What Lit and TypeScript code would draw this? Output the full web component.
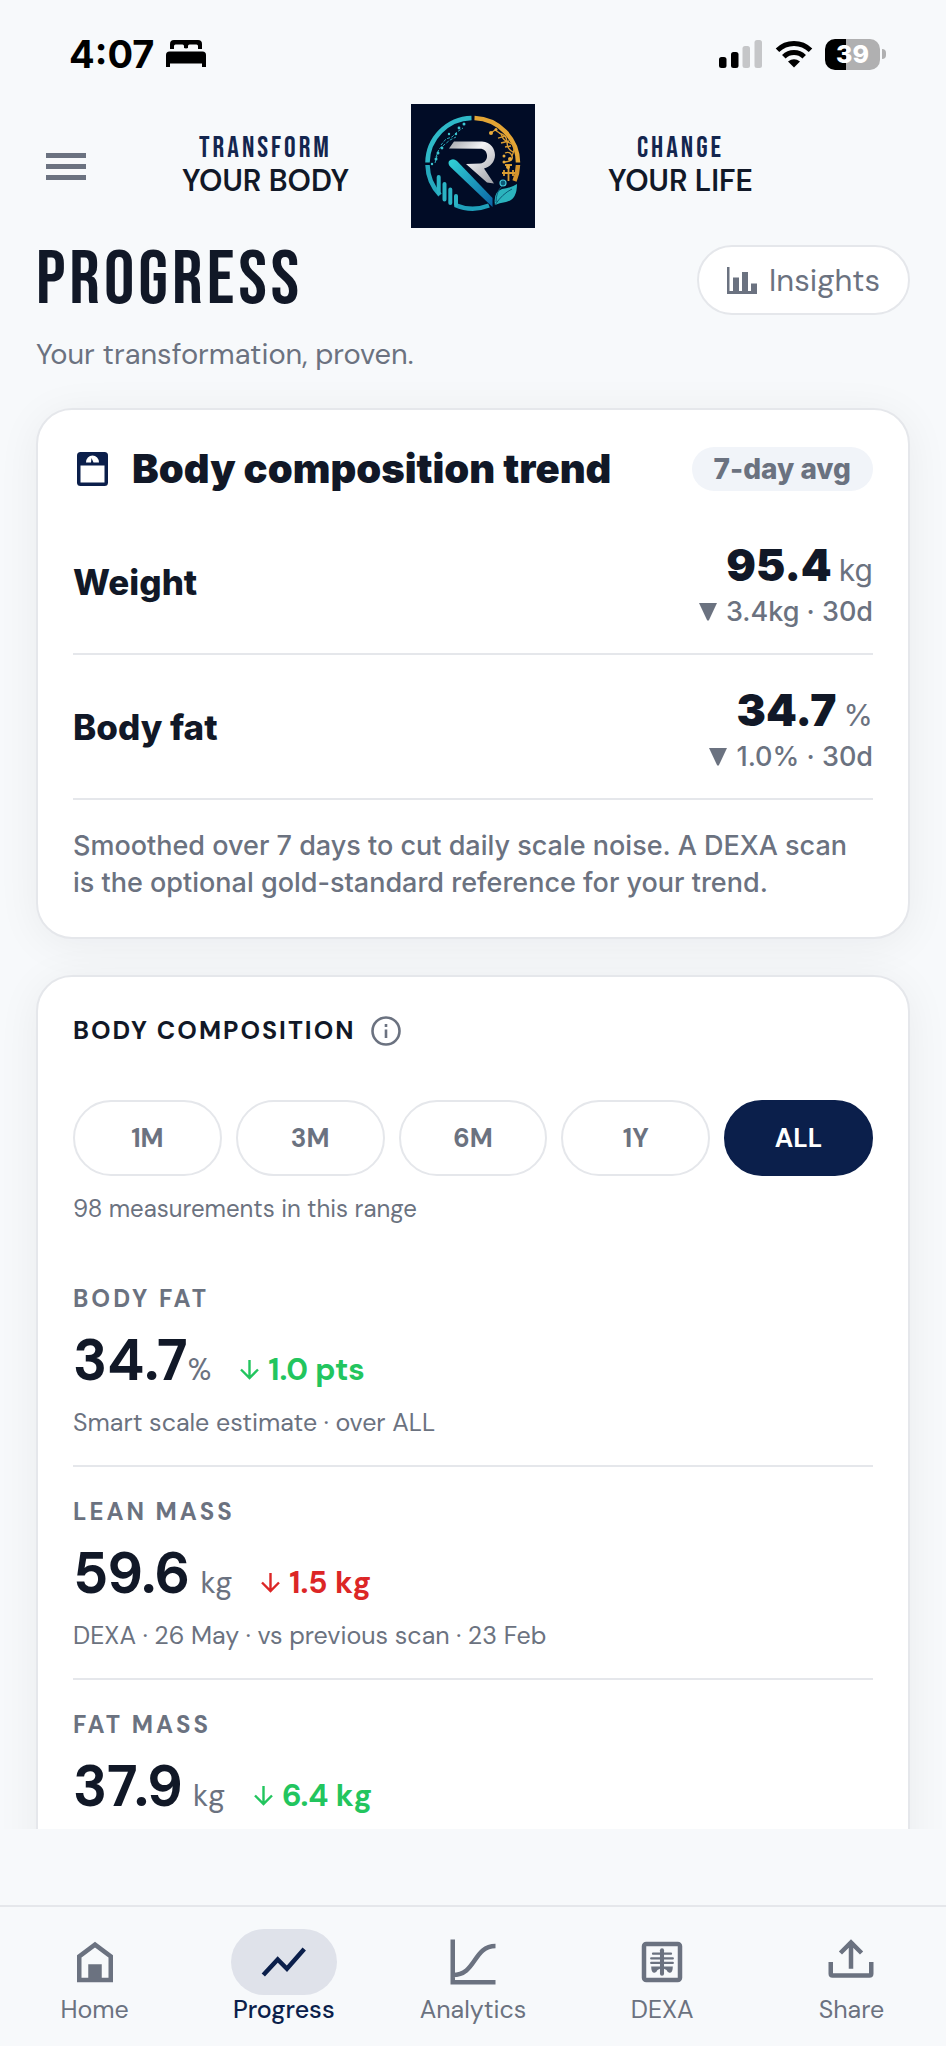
import { html, css, svg, LitElement } from 'lit';
import { property, state } from 'lit/decorators.js';
import { classMap } from 'lit/directives/class-map.js';

interface TrendRow {
  label: string;
  value: string;
  unit: string;
  change: string;
}

interface Metric {
  label: string;
  value: string;
  unit: string;
  spaced: boolean;
  delta: string;
  tone: string;
  note?: string;
}

const TREND: TrendRow[] = [
  { label: 'Weight', value: '95.4', unit: 'kg', change: '3.4kg · 30d' },
  { label: 'Body fat', value: '34.7', unit: '%', change: '1.0% · 30d' },
];

const METRICS: Metric[] = [
  { label: 'BODY FAT', value: '34.7', unit: '%', spaced: false, delta: '1.0 pts', tone: 'good', note: 'Smart scale estimate · over ALL' },
  { label: 'LEAN MASS', value: '59.6', unit: 'kg', spaced: true, delta: '1.5 kg', tone: 'bad', note: 'DEXA · 26 May · vs previous scan · 23 Feb' },
  { label: 'FAT MASS', value: '37.9', unit: 'kg', spaced: true, delta: '6.4 kg', tone: 'good' },
];

const RANGES = ['1M', '3M', '6M', '1Y', 'ALL'];

const NAV_ICONS = {
  Home: svg`
    <path d="M5 20V9.5l7-5.2 7 5.2V20z" fill="none" stroke="currentColor" stroke-width="2" />
    <path d="M9 13h6v7H9z" fill="currentColor" />`,
  Progress: svg`
    <path d="M2.8 17.8l6.4-6.9 4.1 4.1L21 6.2" fill="none" stroke="currentColor" stroke-width="2" />`,
  Analytics: svg`
    <path d="M3 2v19h19M3 17.8C13.5 17.8 12 4.9 22 4.9" fill="none" stroke="currentColor" stroke-width="2" />`,
  DEXA: svg`
    <rect x="4" y="4" width="16" height="16" rx="1" fill="none" stroke="currentColor" stroke-width="2" />
    <path d="M12 6.8v10.4" stroke="currentColor" stroke-width="1.8" stroke-linecap="round" />
    <path d="M8 8.3h8M7.2 10.4h9.6M7.2 12.4h9.6" stroke="currentColor" stroke-width="1" stroke-linecap="round" />
    <path d="M7.2 14h9.6q0 2.6-1.2 2.8-1 .2-1.6-1.2l-2-1-2 1q-.6 1.4-1.6 1.2Q7.2 16.6 7.2 14z" fill="currentColor" />`,
  Share: svg`
    <path d="M3 12v5.2q0 .8.8.8h16.4q.8 0 .8-.8V12M12 15V3.5M7.3 8L12 3.3 16.7 8" fill="none" stroke="currentColor" stroke-width="2" />`,
};

/**
 * Phone status bar with the clock, signal, wifi and battery.
 */
class StatusBar extends LitElement {
  @property({ type: String })
  time = '4:07';
  @property({ type: Number })
  battery = 39;

  static get styles() {
    return css`
      :host {
        display: flex;
        justify-content: space-between;
        align-items: center;
        height: 104px;
        padding: 4px 60px 0 69px;
        box-sizing: border-box;
        color: #000;
        font-family: Inter, 'Liberation Sans', sans-serif;
      }

      .side {
        display: flex;
        align-items: center;
        gap: 12px;
      }

      .time {
        font-size: 38px;
        line-height: 44px;
        font-weight: 700;
      }

      .battery-box {
        display: flex;
        align-items: center;
        gap: 2px;
      }

      .battery {
        width: 55px;
        height: 31px;
        border-radius: 10px;
        background: linear-gradient(to right, #000 39%, #b0b0b1 39%);
        color: #fff;
        font-size: 25px;
        line-height: 31px;
        font-weight: 800;
        text-align: center;
      }

      .tip {
        width: 4px;
        height: 10px;
        border-radius: 0 4px 4px 0;
        background: #b0b0b1;
      }

      svg {
        display: block;
      }
    `;
  }

  render() {
    return html`
      <div class="side">
        <span class="time">${this.time}</span>
        <svg width="40" height="28" viewBox="0 0 40 28" aria-hidden="true">
          <path d="M4 9V4q0-4 4-4h24q4 0 4 4v5h-4V6q0-1.5-1.5-1.5h-7q-1.5 0-1.5 1.5v2q-2 .8-4 0V6q0-1.5-1.5-1.5h-7Q8 4.5 8 6v3z" />
          <path d="M0 27V15q0-3.5 3.5-3.5h33q3.5 0 3.5 3.5v12h-4v-3.5H4V27z" />
        </svg>
      </div>
      <div class="side">
        <svg width="44" height="28" viewBox="0 0 44 28" aria-hidden="true">
          <rect x="0" y="17" width="7.5" height="11" rx="2.5" />
          <rect x="12" y="12" width="7.5" height="16" rx="2.5" />
          <rect x="23.5" y="6" width="7.5" height="22" rx="2.5" fill="#c5c6c8" />
          <rect x="35.5" y="0" width="7.5" height="28" rx="2.5" fill="#c5c6c8" />
        </svg>
        <svg width="38" height="28" viewBox="0 0 38 28" aria-hidden="true">
          <path d="M2.5 10.3a23.5 23.5 0 0 1 33 0M8.8 16.8a14.5 14.5 0 0 1 20.4 0" fill="none" stroke="#000" stroke-width="5" />
          <path d="M19 27.5l-6-6q6-4.5 12 0z" />
        </svg>
        <div class="battery-box">
          <div class="battery">${this.battery}</div>
          <div class="tip"></div>
        </div>
      </div>
    `;
  }
}

customElements.define('status-bar', StatusBar);

/**
 * Round R emblem on a dark square.
 */
class BrandLogo extends LitElement {
  static get styles() {
    return css`
      :host,
      svg {
        display: block;
      }
    `;
  }

  render() {
    return html`
      <svg width="124" height="124" viewBox="0 0 124 124" role="img" aria-label="Logo">
        <defs>
          <linearGradient id="blade" x1="0" y1="0" x2="1" y2="1">
            <stop offset="0" stop-color="#32d3d6" />
            <stop offset="1" stop-color="#0a63a5" />
          </linearGradient>
          <linearGradient id="silver" x1="0" y1="0" x2="1" y2="1">
            <stop offset="0" stop-color="#a3a5ab" />
            <stop offset="0.4" stop-color="#f3f3f5" />
            <stop offset="1" stop-color="#9c9ea5" />
          </linearGradient>
        </defs>
        <rect width="124" height="124" fill="#010c26" />
        <g fill="none" stroke-width="4.5">
          <path d="M16.5 58.5A45.3 45.3 0 0 1 60.5 14" stroke="#2fb9c8" />
          <path d="M63.5 14A45.3 45.3 0 0 1 107 58.5" stroke="#e3a535" />
          <path d="M107 61A45.3 45.3 0 0 1 103.5 77" stroke="#d2922c" />
          <path d="M16.5 61A45.3 45.3 0 0 0 29 91" stroke="#25a9bd" />
          <path d="M44 101A45.3 45.3 0 0 0 78 101.5" stroke="#1f9fba" />
        </g>
        <path
          d="M27.7 73v16M33.5 80v15.5M39.3 85.5v13.5M45 92v9"
          stroke="#2bb3c4"
          stroke-width="4"
          stroke-linecap="round"
        />
        <path
          d="M30 41l5-6 6-2 5-5 6-4M25 53l3-8 5-4 6-5 6-3M24 59l2-7"
          fill="none"
          stroke="#2aa9ba"
          stroke-width="1"
          stroke-dasharray="3 1.5"
        />
        <g fill="#3cc6d2">
          <circle cx="53" cy="20" r="1.5" /><circle cx="48" cy="24" r="1.4" />
          <circle cx="45" cy="30" r="1.2" /><circle cx="38" cy="30" r="1.2" />
          <circle cx="31" cy="44" r="1.4" /><circle cx="27" cy="49" r="1.5" />
          <circle cx="25" cy="55" r="1.5" /><circle cx="21" cy="60" r="1.2" />
        </g>
        <g fill="none" stroke="#d99c32" stroke-width="1.3">
          <path d="M80 29l4-3 6 4q2 7 9 9t2 13M88 29q8 2 8 9t6 10M87 34l7-2M90 39l8-2M94 43l6-1M94 49q5-2 7 3t-7 6" />
          <path d="M91 69h13M97.5 61v16M93 66v6M102 66v6M94 61h7" stroke-width="1.8" />
        </g>
        <g fill="#e8ac3c">
          <circle cx="80" cy="29" r="2" /><circle cx="85" cy="25.5" r="1.5" />
          <circle cx="93" cy="52" r="1.5" /><circle cx="93" cy="58" r="1.5" />
          <circle cx="99" cy="55" r="2" /><circle cx="97" cy="63" r="2" />
        </g>
        <path
          d="M38 44.5L43 37.5H71C80 38 84 45 84 51C84 58 79 63 73 64.5L83 79.5L76 78.5L55 60L69 59.5C74 59 76.5 55 76 51C75.5 47 73 44.7 69 44.7Z"
          fill="url(#silver)"
        />
        <path d="M38 57Q42 53.5 46 57L81.5 94V103L39.5 63Q36.5 60 38 57Z" fill="url(#blade)" />
        <path d="M84 101Q82 88 91 85Q100 84 106 80Q106 96 95 98Q88 99 84 101Z" fill="#2bb3bd" />
        <path d="M84 101Q91 90 101 85M85 98q0-10 6-16" fill="none" stroke="#0b5a77" stroke-width="1" />
        <circle cx="92" cy="79" r="3" fill="#0b5a77" stroke="#45c6d6" stroke-width="1.2" />
      </svg>
    `;
  }
}

customElements.define('brand-logo', BrandLogo);

class AppRoot extends LitElement {
  @state()
  range = 'ALL';
  @state()
  page = 'Progress';

  static get styles() {
    return css`
      :host {
        display: flex;
        flex-direction: column;
        height: 100vh;
        background: #f7f9fb;
        color: #111827;
        font-family: 'DM Sans', Inter, 'Liberation Sans', sans-serif;
        font-size: 25px;
        line-height: 30px;
      }

      * {
        box-sizing: border-box;
      }

      svg {
        display: block;
        flex: none;
      }

      h1,
      h2,
      h3,
      p {
        margin: 0;
      }

      button {
        border: 0;
        padding: 0;
        background: none;
        color: #6b7280;
        font-family: inherit;
        cursor: pointer;
      }

      .header {
        display: grid;
        grid-template-columns: 84px 1fr 124px 1fr 84px;
        align-items: center;
        padding: 0 36px;
      }

      .menu {
        display: flex;
        flex-direction: column;
        gap: 6px;
        width: 60px;
        padding: 10px;
      }

      .menu span {
        height: 5px;
        background: #6b7280;
      }

      .slogan {
        display: flex;
        flex-direction: column;
        align-items: center;
        padding-bottom: 2px;
        font-size: 30px;
        line-height: 32px;
        font-weight: 600;
      }

      .slogan .accent {
        color: #14264f;
        font-family: 'Bebas Neue', 'Roboto Condensed', 'Liberation Sans Narrow', sans-serif;
        font-size: 29px;
        letter-spacing: 3px;
        font-weight: 400;
      }

      main {
        flex: 1;
        min-height: 0;
        overflow: hidden;
        display: flex;
        flex-direction: column;
        padding: 17px 36px 0;
      }

      .title-row {
        display: flex;
        justify-content: space-between;
        align-items: flex-start;
        height: 70px;
      }

      h1 {
        font-family: 'Bebas Neue', 'Roboto Condensed', 'Liberation Sans Narrow', sans-serif;
        font-size: 76px;
        line-height: 72px;
        letter-spacing: 4px;
        font-weight: 400;
      }

      .insights {
        display: flex;
        align-items: center;
        gap: 12px;
        height: 70px;
        padding: 0 28px;
        border: 2px solid #e5e7eb;
        border-radius: 35px;
        background: #fff;
        font-size: 31px;
      }

      .subtitle {
        margin-top: 21px;
        color: #6b7280;
        font-size: 29px;
        line-height: 36px;
      }

      .card {
        flex: none;
        margin-top: 36px;
        padding: 36px 35px;
        border: 2px solid #e5e7eb;
        border-radius: 36px;
        background: #fff;
        box-shadow: 0 6px 44px rgb(17 24 39 / 6%);
      }

      .trend-card {
        font-family: Inter, 'Liberation Sans', sans-serif;
      }

      .card-head {
        display: flex;
        align-items: center;
        height: 46px;
        margin-bottom: 18px;
        padding-left: 4px;
      }

      .card-head h2 {
        flex: 1;
        margin-left: 24px;
        font-size: 40px;
        line-height: 44px;
        font-weight: 900;
      }

      .badge {
        padding: 0 22px;
        border-radius: 22px;
        background: #f1f4f9;
        color: #6b7280;
        font-size: 28px;
        line-height: 44px;
        font-weight: 800;
      }

      .trend {
        display: flex;
        justify-content: space-between;
        align-items: center;
        height: 145px;
        border-bottom: 2px solid #e5e7eb;
      }

      .trend h3 {
        font-size: 35px;
        line-height: 44px;
        font-weight: 800;
      }

      .reading {
        display: flex;
        flex-direction: column;
        align-items: flex-end;
        gap: 2px;
        padding-top: 6px;
        color: #6b7280;
      }

      .reading strong {
        color: #111827;
        font-size: 44px;
        line-height: 52px;
        font-weight: 900;
      }

      .unit {
        color: #6b7280;
        font-size: 30px;
        font-weight: 400;
      }

      .change {
        display: flex;
        align-items: center;
        gap: 9px;
        font-size: 27px;
        line-height: 38px;
        font-weight: 500;
      }

      .explain {
        margin-top: 27px;
        color: #6b7280;
        font-size: 27px;
        line-height: 37px;
        font-weight: 500;
      }

      .section-head {
        display: flex;
        align-items: center;
        gap: 16px;
        height: 35px;
        margin-bottom: 52px;
      }

      .section-head h2 {
        font-size: 25px;
        line-height: 30px;
        font-weight: 700;
        letter-spacing: 2px;
      }

      .ranges {
        display: flex;
        gap: 14px;
      }

      .range {
        flex: 1;
        height: 76px;
        border: 2px solid #e5e7eb;
        border-radius: 38px;
        font-size: 26px;
        font-weight: 700;
      }

      .range.active {
        border-color: #0b1f4b;
        background: #0b1f4b;
        color: #fff;
      }

      .count {
        margin-top: 18px;
        color: #6b7280;
        font-size: 24px;
      }

      .metrics {
        margin-top: 30px;
      }

      .metric {
        height: 213px;
        padding-top: 30px;
        border-bottom: 2px solid #e5e7eb;
        color: #6b7280;
      }

      .metric h3 {
        font-size: 24px;
        line-height: 30px;
        font-weight: 700;
        letter-spacing: 3px;
      }

      .figures {
        display: flex;
        align-items: baseline;
        margin: 15px 0 6px;
        line-height: 64px;
      }

      .figures strong {
        color: #111827;
        font-size: 57px;
        font-weight: 700;
      }

      .unit.spaced {
        margin-left: 10px;
      }

      .delta {
        display: flex;
        align-items: baseline;
        gap: 9px;
        margin-left: 29px;
        font-size: 31px;
        font-weight: 700;
      }

      .good {
        color: #22c55e;
      }

      .bad {
        color: #dc2626;
      }

      nav {
        display: flex;
        flex: none;
        height: 141px;
        margin-top: 76px;
        padding-top: 22px;
        border-top: 2px solid #e5e7eb;
      }

      nav a {
        display: flex;
        flex: 1;
        flex-direction: column;
        align-items: center;
        color: #6b7280;
        text-decoration: none;
      }

      .tab-icon {
        padding: 6px 26px;
        border-radius: 33px;
      }

      nav a.active {
        color: #0b1f4b;
        font-weight: 500;
      }

      nav a.active .tab-icon {
        background: #dfe2ea;
      }
    `;
  }

  renderTrend(row: TrendRow) {
    return html`
      <div class="trend">
        <h3>${row.label}</h3>
        <div class="reading">
          <div><strong>${row.value}</strong> <span class="unit">${row.unit}</span></div>
          <div class="change">
            <svg width="18" height="18" viewBox="0 0 18 18" aria-hidden="true">
              <path d="M0 0h18L10 17q-1 1.5-2 0z" fill="currentColor" />
            </svg>
            ${row.change}
          </div>
        </div>
      </div>
    `;
  }

  renderMetric(metric: Metric) {
    return html`
      <div class="metric">
        <h3>${metric.label}</h3>
        <div class="figures">
          <strong>${metric.value}</strong>
          <span class="unit ${classMap({ spaced: metric.spaced })}">${metric.unit}</span>
          <span class="delta ${metric.tone}">
            <svg width="19" height="20" viewBox="0 0 19 20" aria-hidden="true">
              <path d="M9.5 0v18M1 9.5l8.5 8.5 8.5-8.5" fill="none" stroke="currentColor" stroke-width="2.4" />
            </svg>
            ${metric.delta}
          </span>
        </div>
        ${metric.note ? html`<p>${metric.note}</p>` : ''}
      </div>
    `;
  }

  render() {
    return html`
      <status-bar></status-bar>
      <header class="header">
        <button class="menu" aria-label="Menu"><span></span><span></span><span></span></button>
        <div class="slogan"><span class="accent">TRANSFORM</span><span>YOUR BODY</span></div>
        <brand-logo></brand-logo>
        <div class="slogan"><span class="accent">CHANGE</span><span>YOUR LIFE</span></div>
      </header>
      <main>
        <div class="title-row">
          <h1>PROGRESS</h1>
          <button class="insights">
            <svg width="30" height="27" viewBox="0 0 30 27" fill="currentColor" aria-hidden="true">
              <path d="M0 0h2.5v24H6V10.5h6V24h3V5h6v19h3v-7.5h6V27H0z" />
            </svg>
            Insights
          </button>
        </div>
        <p class="subtitle">Your transformation, proven.</p>

        <section class="card trend-card">
          <div class="card-head">
            <svg width="31" height="34" viewBox="0 0 31 34" aria-hidden="true">
              <rect width="31" height="34" rx="3.5" fill="#0b1f4b" />
              <path d="M3.5 13.5h24v17h-24zM9 10.5a6.5 7 0 0 1 13 0h-5.5L14.5 6l-.5 4.5z" fill="#fff" />
            </svg>
            <h2>Body composition trend</h2>
            <span class="badge">7-day avg</span>
          </div>
          ${TREND.map((row) => this.renderTrend(row))}
          <p class="explain">
            Smoothed over 7 days to cut daily scale noise. A DEXA scan is the optional gold-standard reference for your trend.
          </p>
        </section>

        <section class="card">
          <div class="section-head">
            <h2>BODY COMPOSITION</h2>
            <button aria-label="About body composition">
              <svg width="30" height="30" viewBox="0 0 30 30" aria-hidden="true">
                <circle cx="15" cy="15" r="13.5" fill="none" stroke="currentColor" stroke-width="2.6" />
                <path d="M15 13.5v8.5M15 8v3" stroke="currentColor" stroke-width="2.6" />
              </svg>
            </button>
          </div>
          <div class="ranges" role="group" aria-label="Range">
            ${RANGES.map(
              (name) => html`
                <button
                  class="range ${classMap({ active: name === this.range })}"
                  aria-pressed=${name === this.range}
                  @click=${() => (this.range = name)}
                >${name}</button>
              `
            )}
          </div>
          <p class="count">98 measurements in this range</p>
          <div class="metrics">${METRICS.map((metric) => this.renderMetric(metric))}</div>
        </section>
      </main>
      <nav>
        ${Object.entries(NAV_ICONS).map(
          ([name, icon]) => html`
            <a
              href="#${name.toLowerCase()}"
              class=${classMap({ active: name === this.page })}
              @click=${() => (this.page = name)}
            >
              <span class="tab-icon">
                <svg width="54" height="54" viewBox="0 0 24 24" aria-hidden="true">${icon}</svg>
              </span>
              ${name}
            </a>
          `
        )}
      </nav>
    `;
  }
}

customElements.define('app-root', AppRoot);
